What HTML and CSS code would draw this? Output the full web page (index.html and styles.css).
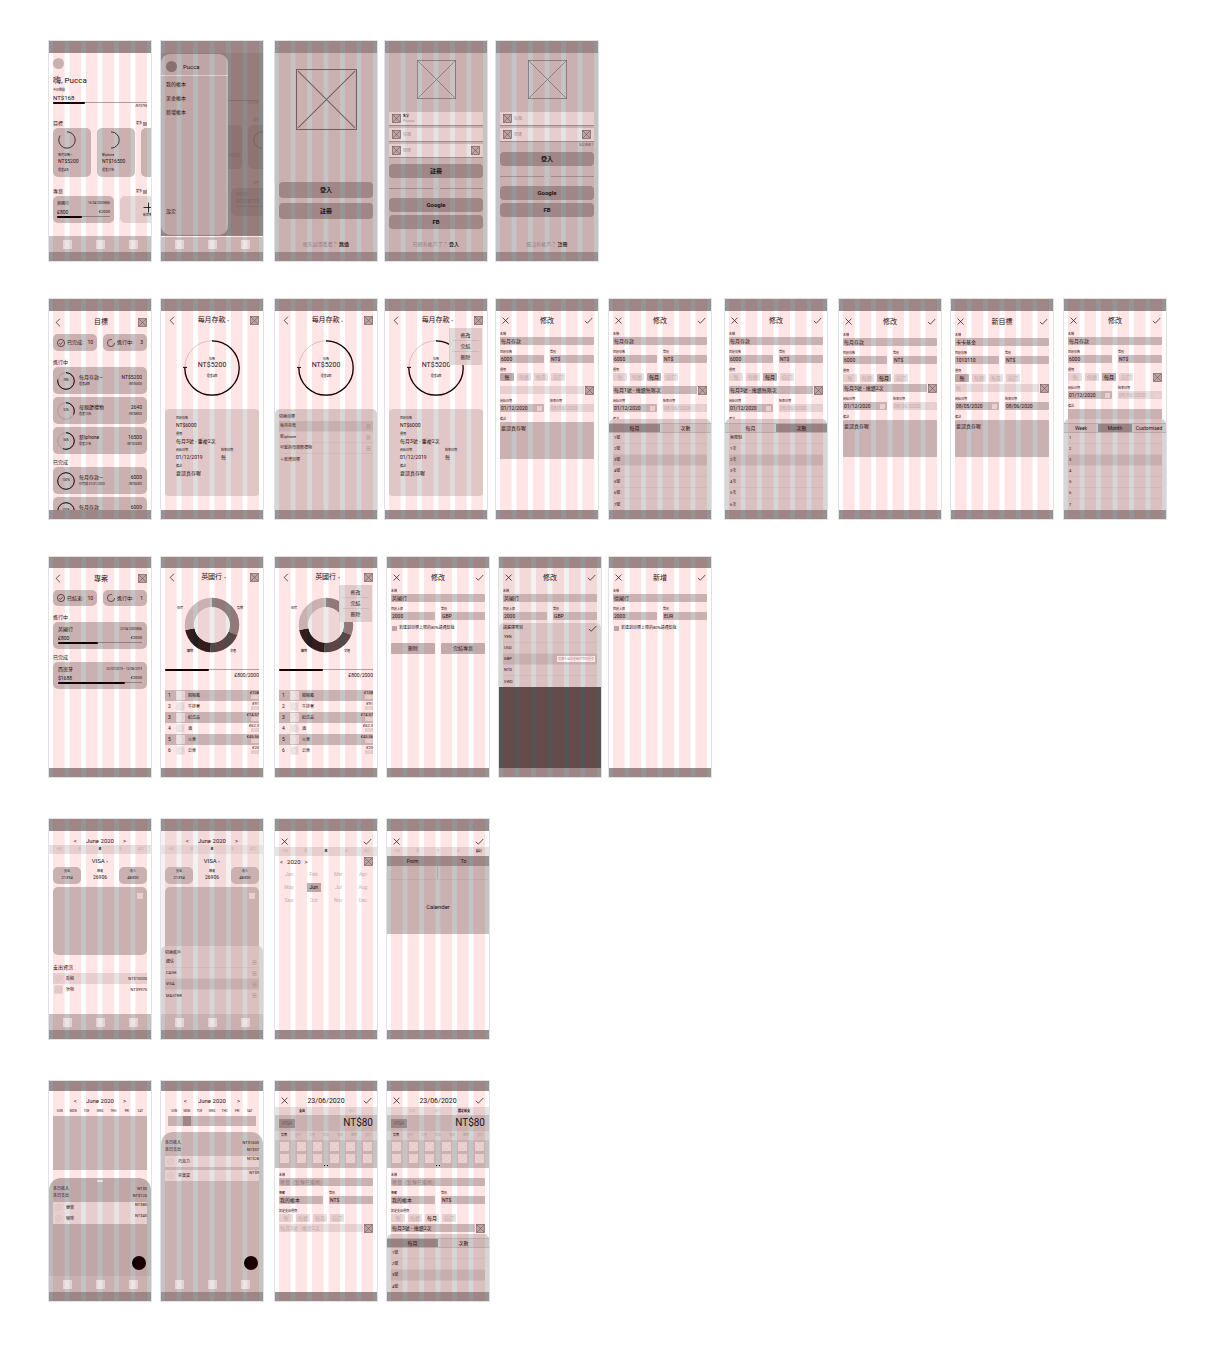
FILE: index.html
```html
<!DOCTYPE html>
<html lang="zh-Hant">
<head>
<meta charset="utf-8">
<meta name="viewport" content="width=device-width, initial-scale=1">
<title>Pucca wireframes</title>
<link rel="stylesheet" href="styles.css">
</head>
<body>
<svg class="defs" aria-hidden="true">
  <symbol id="xbox" viewBox="0 0 10 10"><rect x=".4" y=".4" width="9.2" height="9.2"/><path d="M.8.8l8.4 8.4M9.2.8L.8 9.2"/></symbol>
  <symbol id="frame" viewBox="0 0 60 60"><rect x=".5" y=".5" width="59" height="59"/><path d="M2 2l56 56M58 2L2 58"/></symbol>
  <symbol id="back" viewBox="0 0 10 10"><path d="M6.6.8L2.4 5l4.2 4.2"/></symbol>
  <symbol id="close" viewBox="0 0 10 10"><path d="M1.8 1.8l6.6 6.6M8.4 1.8L1.8 8.4"/></symbol>
  <symbol id="check" viewBox="0 0 10 10"><path d="M1 5.4l2.7 2.6L9.2 2.2"/></symbol>
  <symbol id="bars" viewBox="0 0 6 6"><path d="M.5 1h5M.5 3h5M.5 5h5"/></symbol>
  <symbol id="plus" viewBox="0 0 10 10"><path d="M5 .5v9M.5 5h9"/></symbol>
  <symbol id="donut" viewBox="0 0 94 58">
    <g fill="none" stroke-width="9.4" transform="rotate(-90 47 29)">
      <circle cx="47" cy="29" r="22.5" stroke="#868686" pathLength="100" stroke-dasharray="31 100"/>
      <circle cx="47" cy="29" r="22.5" stroke="#4c4c4c" pathLength="100" stroke-dasharray="20 100" stroke-dashoffset="-31"/>
      <circle cx="47" cy="29" r="22.5" stroke="#1f1f1f" pathLength="100" stroke-dasharray="21 100" stroke-dashoffset="-51"/>
      <circle cx="47" cy="29" r="22.5" stroke="#c4c4c4" pathLength="100" stroke-dasharray="28 100" stroke-dashoffset="-72"/>
    </g>
    <circle cx="47" cy="29" r="17.8" fill="#ececec"/>
  </symbol>
  <symbol id="dial" viewBox="0 0 58 58">
    <g fill="none" transform="rotate(-90 29 29)">
      <circle cx="29" cy="29" r="27.2" stroke="#b8b8b8" stroke-width=".6"/>
      <circle cx="29" cy="29" r="27.2" stroke="#000" stroke-width="1.3" pathLength="100" stroke-dasharray="75 100"/>
    </g>
    <path d="M0 28.4h4" fill="none" stroke="#000"/>
  </symbol>
</svg>

<main class="board">

<!-- Home and sign-in -->
<div class="row row--home">
  <section class="screen">
    <div class="status"></div>
    <div class="body pad">
      <div class="avatar home-avatar"></div>
      <h1 class="greeting">嗨, Pucca</h1>
      <p class="t3 line6">今日剩餘</p>
      <p class="t6 amount">NT$168</p>
      <div class="bar"><i style="width:34%"></i></div>
      <p class="t3 right line5">/NT$798</p>
      <div class="section"><h2>目標</h2><a href="#">更多 <svg class="xbox s4"><use href="#xbox"/></svg></a></div>
      <div class="cards">
        <article class="card goal"><svg class="ring17" viewBox="0 0 18 18"><circle cx="9" cy="9" r="8.2" pathLength="100" stroke-dasharray="84 100"/></svg><span class="t3">每月存款—</span><b>NT$5200</b><small>還差4天</small></article>
        <article class="card goal"><svg class="ring17" viewBox="0 0 18 18"><circle cx="9" cy="9" r="8.2" pathLength="100" stroke-dasharray="50 100"/></svg><span class="t3">新iphone</span><b>NT$16500</b><small>還差27天</small></article>
        <article class="card goal"></article>
      </div>
      <div class="section"><h2>專案</h2><a href="#">更多 <svg class="xbox s4"><use href="#xbox"/></svg></a></div>
      <div class="cards">
        <article class="card project"><div class="split"><span class="t4">英國行</span><span class="t3">16/04/2020開始</span></div><div class="split"><span class="t5">£800</span><span class="t4">£2000</span></div><div class="bar"><i style="width:48%"></i></div></article>
        <button class="card add"><svg class="icon s11"><use href="#plus"/></svg><span>新增專案</span></button>
      </div>
      <nav class="tabbar"><svg class="xbox light s9"><use href="#xbox"/></svg><svg class="xbox light s9"><use href="#xbox"/></svg><svg class="xbox light s9"><use href="#xbox"/></svg></nav>
    </div>
    <div class="home"></div>
  </section>

  <section class="screen">
    <div class="status"></div>
    <div class="body shade">
      <div class="ghost">
        <div class="bar"></div>
        <p class="t3">/NT$798</p>
        <p class="t3 ghost-more">更多</p>
        <div class="cards"><div class="card goal"><b>NT$16500</b></div><div class="card goal"><svg class="ring17" viewBox="0 0 18 18"><circle cx="9" cy="9" r="8.2" pathLength="100" stroke-dasharray="84 100" transform="rotate(180 9 9)"/></svg></div></div>
        <p class="t3 ghost-more">更多</p>
        <div class="card ghost-project"><span class="t4">西班牙</span><span class="t5">NT$18718</span><div class="bar"></div></div>
      </div>
      <aside class="drawer">
        <div class="drawer-user"><div class="avatar dark"></div><span>Pucca</span></div>
        <a href="#">我的帳本</a><a href="#">美金帳本</a><a href="#">新增帳本</a>
        <a href="#" class="last">設定</a>
      </aside>
      <nav class="tabbar lined"><svg class="xbox light s9"><use href="#xbox"/></svg><svg class="xbox light s9"><use href="#xbox"/></svg><svg class="xbox light s9"><use href="#xbox"/></svg></nav>
    </div>
    <div class="home"></div>
  </section>

  <section class="screen grey">
    <div class="status"></div>
    <div class="body pad">
      <svg class="frame logo-lg"><use href="#frame"/></svg>
      <div class="stack start"><button class="cta tall">登入</button><button class="cta tall">註冊</button></div>
      <p class="switch">想先試用看看？ <a href="#">跳過</a></p>
    </div>
    <div class="home"></div>
  </section>

  <section class="screen grey">
    <div class="status"></div>
    <div class="body pad">
      <svg class="frame logo"><use href="#frame"/></svg>
      <div class="entries">
        <label class="entry"><svg class="xbox s9"><use href="#xbox"/></svg><span class="named"><small>名字</small><input aria-label="名字" placeholder="Pucca"></span></label>
        <label class="entry"><svg class="xbox s9"><use href="#xbox"/></svg><input aria-label="信箱" placeholder="信箱"></label>
        <label class="entry"><svg class="xbox s9"><use href="#xbox"/></svg><input aria-label="密碼" placeholder="密碼"><svg class="xbox s9"><use href="#xbox"/></svg></label>
      </div>
      <button class="cta gap6">註冊</button>
      <div class="or">○</div>
      <div class="stack"><button class="cta">Google</button><button class="cta">FB</button></div>
      <p class="switch">已經有帳戶了？ <a href="#">登入</a></p>
    </div>
    <div class="home"></div>
  </section>

  <section class="screen grey">
    <div class="status"></div>
    <div class="body pad">
      <svg class="frame logo"><use href="#frame"/></svg>
      <div class="entries">
        <label class="entry"><svg class="xbox s9"><use href="#xbox"/></svg><input aria-label="信箱" placeholder="信箱"></label>
        <label class="entry"><svg class="xbox s9"><use href="#xbox"/></svg><input aria-label="密碼" placeholder="密碼"><svg class="xbox s9"><use href="#xbox"/></svg></label>
      </div>
      <a href="#" class="forgot">忘記密碼？</a>
      <button class="cta">登入</button>
      <div class="or">○</div>
      <div class="stack"><button class="cta">Google</button><button class="cta">FB</button></div>
      <p class="switch">還沒有帳戶？ <a href="#">註冊</a></p>
    </div>
    <div class="home"></div>
  </section>
</div>

<!-- Goals -->
<div class="row row--goals">
  <section class="screen">
    <div class="status"></div>
    <div class="body pad">
      <header class="head head--tall"><svg class="icon s9"><use href="#back"/></svg><h2>目標</h2><svg class="xbox s9"><use href="#xbox"/></svg></header>
      <div class="pills"><div class="card pill"><svg class="icon s8" viewBox="0 0 10 10"><circle cx="5" cy="5" r="4.5"/><path d="M2.6 5.2l1.7 1.7 3.2-3.6"/></svg><span>已完成:</span><span>10</span></div><div class="card pill"><svg class="icon s8" viewBox="0 0 10 10"><circle cx="5" cy="5" r="4.5" pathLength="100" stroke-dasharray="80 100"/></svg><span>進行中:</span><span>3</span></div></div>
      <h3 class="heading">進行中</h3>
      <div class="list">
        <article class="card item"><div class="ring18"><svg viewBox="0 0 18 18"><circle class="track" cx="9" cy="9" r="8.3"/><circle cx="9" cy="9" r="8.3" pathLength="100" stroke-dasharray="78 100"/></svg><span>78%</span></div><div class="info"><span>每月存款—</span><small>還差4個</small></div><div class="info end"><span>NT$5200</span><small>/NT$6000</small></div></article>
        <article class="card item"><div class="ring18"><svg viewBox="0 0 18 18"><circle class="track" cx="9" cy="9" r="8.3"/><circle cx="9" cy="9" r="8.3" pathLength="100" stroke-dasharray="32 100"/></svg><span>32%</span></div><div class="info"><span>母親節禮物</span><small>還差13天</small></div><div class="info end"><span>2640</span><small>/NT$8000</small></div></article>
        <article class="card item"><div class="ring18"><svg viewBox="0 0 18 18"><circle class="track" cx="9" cy="9" r="8.3"/><circle cx="9" cy="9" r="8.3" pathLength="100" stroke-dasharray="56 100"/></svg><span>56%</span></div><div class="info"><span>新Iphone</span><small>還差27天</small></div><div class="info end"><span>16500</span><small>/NT$25000</small></div></article>
      </div>
      <h3 class="heading">已完成</h3>
      <div class="list">
        <article class="card item"><div class="ring18"><svg viewBox="0 0 18 18"><circle cx="9" cy="9" r="8.3"/></svg><span>100%</span></div><div class="info"><span>每月存款—</span><small>已完成 01/01/2020</small></div><div class="info end"><span>6000</span><small>/NT$6000</small></div></article>
        <article class="card item"><div class="ring18"><svg viewBox="0 0 18 18"><circle cx="9" cy="9" r="8.3"/></svg><span>100%</span></div><div class="info"><span>每月存款</span><small>已完成</small></div><div class="info end"><span>6000</span><small>/NT$6000</small></div></article>
      </div>
    </div>
    <div class="home"></div>
  </section>

  <section class="screen">
    <div class="status"></div>
    <div class="body pad">
      <header class="head head--detail"><svg class="icon s9"><use href="#back"/></svg><h2>每月存款 <span class="caret">▾</span></h2><svg class="xbox s9"><use href="#xbox"/></svg></header>
      <div class="dial"><svg><use href="#dial"/></svg><div><small>存款</small><b>NT$5200</b><small class="later">還差4個</small></div></div>
      <dl class="panel"><div><dt>目標存款</dt><dd>NT$6000</dd></div><div><dt>週期</dt><dd>每月3號 - 重複2次</dd></div><div class="half"><dt>開始日期</dt><dd>01/12/2019</dd></div><div class="half"><dt>結束日期</dt><dd>無</dd></div><div><dt>備註</dt><dd>要認真存喔</dd></div></dl>
    </div>
    <div class="home"></div>
  </section>

  <section class="screen">
    <div class="status"></div>
    <div class="body pad">
      <header class="head head--detail"><svg class="icon s9"><use href="#back"/></svg><h2>每月存款 <span class="caret">▴</span></h2><svg class="xbox s9"><use href="#xbox"/></svg></header>
      <div class="dial"><svg><use href="#dial"/></svg><div><small>存款</small><b>NT$5200</b><small class="later">還差4個</small></div></div>
      <div class="sheet sheet--goals">
        <h3>切換目標</h3>
        <ul class="options"><li class="on">每月存款<svg class="icon grey-icon s5"><use href="#bars"/></svg></li><li>新iphone<svg class="icon grey-icon s5"><use href="#bars"/></svg></li><li>可愛的母親節禮物<svg class="icon grey-icon s5"><use href="#bars"/></svg></li><li>＋新增目標</li></ul>
      </div>
    </div>
    <div class="home"></div>
  </section>

  <section class="screen">
    <div class="status"></div>
    <div class="body pad">
      <header class="head head--detail"><svg class="icon s9"><use href="#back"/></svg><h2>每月存款 <span class="caret">▾</span></h2><svg class="xbox s9"><use href="#xbox"/></svg></header>
      <div class="dial"><svg><use href="#dial"/></svg><div><small>存款</small><b>NT$5200</b><small class="later">還差4個</small></div></div>
      <dl class="panel"><div><dt>目標存款</dt><dd>NT$6000</dd></div><div><dt>週期</dt><dd>每月3號 - 重複2次</dd></div><div class="half"><dt>開始日期</dt><dd>01/12/2019</dd></div><div class="half"><dt>結束日期</dt><dd>無</dd></div><div><dt>備註</dt><dd>要認真存喔</dd></div></dl>
      <div class="menu"><button>修改</button><button>完結</button><button>刪除</button></div>
    </div>
    <div class="home"></div>
  </section>

  <section class="screen">
    <div class="status"></div>
    <div class="body pad">
      <header class="head"><svg class="icon s9"><use href="#close"/></svg><h2>修改</h2><svg class="icon s9"><use href="#check"/></svg></header>
      <form class="form">
        <label class="field">名稱<input value="每月存款"></label>
        <div class="pair"><label class="field">目標存款<input value="6000"></label><label class="field">幣別<input value="NT$"></label></div>
        <div class="cycle"><div class="field">週期<div class="chips"><button type="button" class="on">無</button><button type="button">每週</button><button type="button">每月</button><button type="button">自訂</button></div></div>
        <div class="note"><input aria-label="週期內容" disabled><svg class="xbox s9"><use href="#xbox"/></svg></div></div>
        <div class="pair"><label class="field">開始日期<span class="date"><input value="01/12/2020"><svg class="xbox light s5"><use href="#xbox"/></svg></span></label><label class="field">結束日期<input value="08/06/2020" disabled></label></div>
        <label class="field">備註<textarea>要認真存喔</textarea></label>
      </form>
    </div>
    <div class="home"></div>
  </section>

  <section class="screen">
    <div class="status"></div>
    <div class="body pad">
      <header class="head"><svg class="icon s9"><use href="#close"/></svg><h2>修改</h2><svg class="icon s9"><use href="#check"/></svg></header>
      <form class="form">
        <label class="field">名稱<input value="每月存款"></label>
        <div class="pair"><label class="field">目標存款<input value="6000"></label><label class="field">幣別<input value="NT$"></label></div>
        <div class="cycle"><div class="field">週期<div class="chips"><button type="button">無</button><button type="button">每週</button><button type="button" class="on">每月</button><button type="button">自訂</button></div></div>
        <div class="note"><input aria-label="週期內容" value="每月1號 - 連續無限次"><svg class="xbox s9"><use href="#xbox"/></svg></div></div>
        <div class="pair"><label class="field">開始日期<span class="date"><input value="01/12/2020"><svg class="xbox light s5"><use href="#xbox"/></svg></span></label><label class="field">結束日期<span class="date"><input value="08/06/2020" disabled><svg class="xbox light s5"><use href="#xbox"/></svg></span></label></div>
        <label class="field">備註<textarea></textarea></label>
      </form>
      <div class="sheet"><div class="tabs"><button class="on">每月</button><button>次數</button></div>
        <ul class="options"><li>1號</li><li>2號</li><li class="on">3號</li><li>4號</li><li>5號</li><li>6號</li><li>7號</li></ul></div>
    </div>
    <div class="home"></div>
  </section>

  <section class="screen">
    <div class="status"></div>
    <div class="body pad">
      <header class="head"><svg class="icon s9"><use href="#close"/></svg><h2>修改</h2><svg class="icon s9"><use href="#check"/></svg></header>
      <form class="form">
        <label class="field">名稱<input value="每月存款"></label>
        <div class="pair"><label class="field">目標存款<input value="6000"></label><label class="field">幣別<input value="NT$"></label></div>
        <div class="cycle"><div class="field">週期<div class="chips"><button type="button">無</button><button type="button">每週</button><button type="button" class="on">每月</button><button type="button">自訂</button></div></div>
        <div class="note"><input aria-label="週期內容" value="每月3號 - 連續無限次"><svg class="xbox s9"><use href="#xbox"/></svg></div></div>
        <div class="pair"><label class="field">開始日期<span class="date"><input value="01/12/2020"><svg class="xbox light s5"><use href="#xbox"/></svg></span></label><label class="field">結束日期<span class="date"><input value="08/06/2020" disabled><svg class="xbox light s5"><use href="#xbox"/></svg></span></label></div>
        <label class="field">備註<textarea></textarea></label>
      </form>
      <div class="sheet"><div class="tabs"><button>每月</button><button class="on">次數</button></div>
        <ul class="options"><li>無限制</li><li>1次</li><li class="on">2次</li><li>3次</li><li>4次</li><li>5次</li><li>6次</li></ul></div>
    </div>
    <div class="home"></div>
  </section>

  <section class="screen">
    <div class="status"></div>
    <div class="body pad">
      <header class="head head--form"><svg class="icon s9"><use href="#close"/></svg><h2>修改</h2><svg class="icon s9"><use href="#check"/></svg></header>
      <form class="form compact">
        <label class="field">名稱<input value="每月存款"></label>
        <div class="pair"><label class="field">目標存款<input value="6000"></label><label class="field">幣別<input value="NT$"></label></div>
        <div class="cycle"><div class="field">週期<div class="chips"><button type="button">無</button><button type="button">每週</button><button type="button" class="on">每月</button><button type="button">自訂</button></div></div>
        <div class="note"><input aria-label="週期內容" value="每月3號 - 連續2次"><svg class="xbox s9"><use href="#xbox"/></svg></div></div>
        <div class="pair"><label class="field">開始日期<span class="date"><input value="01/12/2020"><svg class="xbox light s5"><use href="#xbox"/></svg></span></label><label class="field">結束日期<span class="date"><input value="08/06/2020" disabled><svg class="xbox light s5"><use href="#xbox"/></svg></span></label></div>
        <label class="field">備註<textarea>要認真存喔</textarea></label>
      </form>
    </div>
    <div class="home"></div>
  </section>

  <section class="screen">
    <div class="status"></div>
    <div class="body pad">
      <header class="head head--form"><svg class="icon s9"><use href="#close"/></svg><h2>新目標</h2><svg class="icon s9"><use href="#check"/></svg></header>
      <form class="form compact">
        <label class="field">名稱<input value="卡卡基金"></label>
        <div class="pair"><label class="field">目標存款<input value="1010110"></label><label class="field">幣別<input value="NT$"></label></div>
        <div class="cycle"><div class="field">週期<div class="chips"><button type="button" class="on">無</button><button type="button">每週</button><button type="button">每月</button><button type="button">自訂</button></div></div>
        <div class="note"><input aria-label="週期內容" value="無" disabled><svg class="xbox s9"><use href="#xbox"/></svg></div></div>
        <div class="pair"><label class="field">開始日期<span class="date"><input value="08/05/2020"><svg class="xbox light s5"><use href="#xbox"/></svg></span></label><label class="field">結束日期<input value="08/06/2020"></label></div>
        <label class="field">備註<textarea>要認真存喔</textarea></label>
      </form>
    </div>
    <div class="home"></div>
  </section>

  <section class="screen">
    <div class="status"></div>
    <div class="body pad">
      <header class="head"><svg class="icon s9"><use href="#close"/></svg><h2>修改</h2><svg class="icon s9"><use href="#check"/></svg></header>
      <form class="form">
        <label class="field">名稱<input value="每月存款"></label>
        <div class="pair"><label class="field">目標存款<input value="6000"></label><label class="field">幣別<input value="NT$"></label></div>
        <div class="field">週期<div class="chips"><button type="button">無</button><button type="button">每週</button><button type="button" class="on">每月</button><button type="button">自訂</button><svg class="xbox s9 push"><use href="#xbox"/></svg></div></div>
        <div class="pair"><label class="field">開始日期<span class="date"><input value="01/12/2020"><svg class="xbox light s5"><use href="#xbox"/></svg></span></label><label class="field">結束日期<span class="date"><input value="08/06/2020" disabled><svg class="xbox light s5"><use href="#xbox"/></svg></span></label></div>
        <label class="field">備註<textarea></textarea></label>
      </form>
      <div class="sheet"><div class="tabs"><button>Week</button><button class="on">Month</button><button>Customised</button></div>
        <ul class="options"><li>1</li><li>2</li><li class="on">3</li><li>4</li><li>5</li><li>6</li><li>7</li></ul></div>
    </div>
    <div class="home"></div>
  </section>
</div>

<!-- Projects -->
<div class="row row--projects">
  <section class="screen">
    <div class="status"></div>
    <div class="body pad">
      <header class="head head--form"><svg class="icon s9"><use href="#back"/></svg><h2>專案</h2><svg class="xbox s9"><use href="#xbox"/></svg></header>
      <div class="pills"><div class="card pill"><svg class="icon s8" viewBox="0 0 10 10"><circle cx="5" cy="5" r="4.5"/><path d="M2.6 5.2l1.7 1.7 3.2-3.6"/></svg><span>已結束:</span><span>10</span></div><div class="card pill"><svg class="icon s8" viewBox="0 0 10 10"><circle cx="5" cy="5" r="4.5" pathLength="100" stroke-dasharray="80 100"/></svg><span>進行中:</span><span>1</span></div></div>
      <h3 class="heading">進行中</h3>
      <article class="card project wide"><div class="split"><span class="t5">英國行</span><span class="t3">23/04/2020開始</span></div><div class="split"><span class="t5">£800</span><span class="t4">£2000</span></div><div class="bar"><i style="width:48%"></i></div></article>
      <h3 class="heading">已完成</h3>
      <article class="card project wide"><div class="split"><span class="t5">西班牙</span><span class="t3">02/07/2019 – 10/08/2019</span></div><div class="split"><span class="t5">$1688</span><span class="t4">£2000</span></div><div class="bar"><i style="width:80%"></i></div></article>
    </div>
    <div class="home"></div>
  </section>

  <section class="screen">
    <div class="status"></div>
    <div class="body pad">
      <header class="head head--detail"><svg class="icon s9"><use href="#back"/></svg><h2>英國行 <span class="caret">▾</span></h2><svg class="xbox s9"><use href="#xbox"/></svg></header>
      <svg class="donut" viewBox="0 0 94 58"><use href="#donut"/><text x="12" y="13">住宿</text><text x="72" y="13">食物</text><text x="22" y="56">購物</text><text x="65" y="56">交通</text></svg>
      <div class="bar"><i style="width:47%"></i></div>
      <p class="t5 right line8">£800/2000</p>
      <ol class="spend">
        <li><b>1</b><svg class="xbox light s9"><use href="#xbox"/></svg><span>粗眼霜</span><em>£108<svg class="chip-box xbox light"><use href="#xbox"/></svg></em></li>
        <li><b>2</b><svg class="xbox light s9"><use href="#xbox"/></svg><span>牛排餐</span><em>£91<svg class="chip-box xbox light"><use href="#xbox"/></svg></em></li>
        <li><b>3</b><svg class="xbox light s9"><use href="#xbox"/></svg><span>紀念品</span><em>£74.57<svg class="chip-box xbox light"><use href="#xbox"/></svg></em></li>
        <li><b>4</b><svg class="xbox light s9"><use href="#xbox"/></svg><span>酒</span><em>£62.3<svg class="chip-box xbox light"><use href="#xbox"/></svg></em></li>
        <li><b>5</b><svg class="xbox light s9"><use href="#xbox"/></svg><span>火車</span><em>£45.56<svg class="chip-box xbox light"><use href="#xbox"/></svg></em></li>
        <li><b>6</b><svg class="xbox light s9"><use href="#xbox"/></svg><span>公車</span><em>£20<svg class="chip-box xbox light"><use href="#xbox"/></svg></em></li>
      </ol>
    </div>
    <div class="home"></div>
  </section>

  <section class="screen">
    <div class="status"></div>
    <div class="body pad">
      <header class="head head--detail"><svg class="icon s9"><use href="#back"/></svg><h2>英國行 <span class="caret">▾</span></h2><svg class="xbox s9"><use href="#xbox"/></svg></header>
      <svg class="donut" viewBox="0 0 94 58"><use href="#donut"/><text x="12" y="13">住宿</text><text x="22" y="56">購物</text><text x="65" y="56">交通</text></svg>
      <div class="bar"><i style="width:47%"></i></div>
      <p class="t5 right line8">£800/2000</p>
      <ol class="spend">
        <li><b>1</b><svg class="xbox light s9"><use href="#xbox"/></svg><span>粗眼霜</span><em>£108<svg class="chip-box xbox light"><use href="#xbox"/></svg></em></li>
        <li><b>2</b><svg class="xbox light s9"><use href="#xbox"/></svg><span>牛排餐</span><em>£91<svg class="chip-box xbox light"><use href="#xbox"/></svg></em></li>
        <li><b>3</b><svg class="xbox light s9"><use href="#xbox"/></svg><span>紀念品</span><em>£74.57<svg class="chip-box xbox light"><use href="#xbox"/></svg></em></li>
        <li><b>4</b><svg class="xbox light s9"><use href="#xbox"/></svg><span>酒</span><em>£62.3<svg class="chip-box xbox light"><use href="#xbox"/></svg></em></li>
        <li><b>5</b><svg class="xbox light s9"><use href="#xbox"/></svg><span>火車</span><em>£45.56<svg class="chip-box xbox light"><use href="#xbox"/></svg></em></li>
        <li><b>6</b><svg class="xbox light s9"><use href="#xbox"/></svg><span>公車</span><em>£20<svg class="chip-box xbox light"><use href="#xbox"/></svg></em></li>
      </ol>
      <div class="menu"><button>修改</button><button>完結</button><button>刪除</button></div>
    </div>
    <div class="home"></div>
  </section>

  <section class="screen">
    <div class="status"></div>
    <div class="body pad">
      <header class="head"><svg class="icon s9"><use href="#close"/></svg><h2>修改</h2><svg class="icon s9"><use href="#check"/></svg></header>
      <form class="form">
        <label class="field">名稱<input value="英國行"></label>
        <div class="pair"><label class="field">目標上限<input value="2000"></label><label class="field">幣別<input value="GBP"></label></div>
        <label class="tick"><input type="checkbox">若達到目標上限的80%請通知我</label>
        <div class="pair actions"><button type="button">刪除</button><button type="button">完結專案</button></div>
      </form>
    </div>
    <div class="home"></div>
  </section>

  <section class="screen">
    <div class="status"></div>
    <div class="body pad dim">
      <header class="head"><svg class="icon s9"><use href="#close"/></svg><h2>修改</h2><svg class="icon s9"><use href="#check"/></svg></header>
      <form class="form">
        <label class="field">名稱<input value="英國行"></label>
        <div class="pair"><label class="field">目標上限<input value="2000"></label><label class="field">幣別<input value="GBP"></label></div>
      </form>
      <div class="sheet sheet--currency">
        <h3>請選擇幣別<svg class="icon s9"><use href="#check"/></svg></h3>
        <ul class="options"><li>YEN</li><li>USD</li><li class="on">GBP<span class="tag">建議先至設定新增幣別匯率</span></li><li>NTD</li><li>SWD</li></ul>
        <div class="keyboard"></div>
      </div>
    </div>
    <div class="home"></div>
  </section>

  <section class="screen">
    <div class="status"></div>
    <div class="body pad">
      <header class="head"><svg class="icon s9"><use href="#close"/></svg><h2>新增</h2><svg class="icon s9"><use href="#check"/></svg></header>
      <form class="form">
        <label class="field">名稱<input value="德國行"></label>
        <div class="pair"><label class="field">目標上限<input value="2000"></label><label class="field">幣別<input value="EUR"></label></div>
        <label class="tick"><input type="checkbox">若達到目標上限的80%請通知我</label>
      </form>
    </div>
    <div class="home"></div>
  </section>
</div>

<!-- Reports -->
<div class="row row--reports spaced">
  <section class="screen">
    <div class="status"></div>
    <div class="body pad">
      <header class="month"><button>&lt;</button><h2>June 2020</h2><button>&gt;</button></header>
      <div class="strip"><span>今日</span><span>週</span><span class="on">月</span><span>年</span><span>自訂</span></div>
      <p class="t6 account">VISA <span class="caret">▾</span></p>
      <div class="totals"><div class="card"><small>支出</small><span>21394</span></div><div><small>總資</small><span class="t5">26906</span></div><div class="card"><small>收入</small><span>48300</span></div></div>
      <div class="card chart"><svg class="xbox light s6"><use href="#xbox"/></svg></div>
      <h3 class="heading expense-title">支出資訊</h3>
      <ul class="entries-list"><li class="on"><svg class="xbox pale s9"><use href="#xbox"/></svg><span>房租</span><em>NT$10000</em></li><li><svg class="xbox pale s9"><use href="#xbox"/></svg><span>食物</span><em>NT$9970</em></li></ul>
      <nav class="tabbar"><svg class="xbox light s9"><use href="#xbox"/></svg><svg class="xbox light s9"><use href="#xbox"/></svg><svg class="xbox light s9"><use href="#xbox"/></svg></nav>
    </div>
    <div class="home"></div>
  </section>

  <section class="screen">
    <div class="status"></div>
    <div class="body pad dim">
      <header class="month"><button>&lt;</button><h2>June 2020</h2><button>&gt;</button></header>
      <div class="strip"><span>今日</span><span>週</span><span class="on">月</span><span>年</span><span>自訂</span></div>
      <p class="t6 account">VISA <span class="caret">▾</span></p>
      <div class="totals"><div class="card"><small>支出</small><span>21394</span></div><div><small>總資</small><span class="t5">26906</span></div><div class="card"><small>收入</small><span>48300</span></div></div>
      <div class="card chart"><svg class="xbox light s6"><use href="#xbox"/></svg></div>
      <div class="sheet sheet--accounts">
        <h3>切換帳戶</h3>
        <ul class="options"><li>總信<svg class="icon grey-icon s5"><use href="#bars"/></svg></li><li>CASH<svg class="icon grey-icon s5"><use href="#bars"/></svg></li><li class="on">VISA<svg class="icon grey-icon s5"><use href="#bars"/></svg></li><li>MASTER<svg class="icon grey-icon s5"><use href="#bars"/></svg></li></ul>
      </div>
      <nav class="tabbar"><svg class="xbox light s9"><use href="#xbox"/></svg><svg class="xbox light s9"><use href="#xbox"/></svg><svg class="xbox light s9"><use href="#xbox"/></svg></nav>
    </div>
    <div class="home"></div>
  </section>

  <section class="screen">
    <div class="status"></div>
    <div class="body pad">
      <header class="head head--low"><svg class="icon s9"><use href="#close"/></svg><svg class="icon s9"><use href="#check"/></svg></header>
      <div class="strip"><span>今日</span><span>週</span><span class="on">月</span><span>年</span><span>自訂</span></div>
      <div class="year"><button>&lt;</button><b>2020</b><button>&gt;</button><svg class="xbox s9 push"><use href="#xbox"/></svg></div>
      <div class="months"><button>Jan</button><button>Feb</button><button>Mar</button><button>Apr</button><button>May</button><button class="on">Jun</button><button>Jul</button><button>Aug</button><button>Sep</button><button>Oct</button><button>Nov</button><button>Dec</button></div>
    </div>
    <div class="home"></div>
  </section>

  <section class="screen">
    <div class="status"></div>
    <div class="body pad">
      <header class="head head--low"><svg class="icon s9"><use href="#close"/></svg><svg class="icon s9"><use href="#check"/></svg></header>
      <div class="strip"><span>今日</span><span>週</span><span>月</span><span>年</span><span class="on">自訂</span></div>
      <div class="range"><div class="range-head"><span>From</span><span>To</span></div><div class="range-values"><span></span><span></span></div><p>Calender</p></div>
    </div>
    <div class="home"></div>
  </section>
</div>

<!-- Calendar and entry -->
<div class="row row--entry spaced">
  <section class="screen">
    <div class="status"></div>
    <div class="body pad">
      <header class="month month--short"><button>&lt;</button><h2>June 2020</h2><button>&gt;</button></header>
      <div class="week"><span>SUN</span><span>MON</span><span>TUE</span><span>WED</span><span>THU</span><span>FRI</span><span>SAT</span></div>
      <div class="calendar"></div>
      <div class="sheet day sheet--low">
        <i class="handle"></i>
        <div class="split"><span>本日收入</span><span>NT$0</span></div><div class="split"><span>本日支出</span><span>NT$125</span></div>
        <ul class="day-list"><li><svg class="xbox pale s9"><use href="#xbox"/></svg><span>便當</span><em>NT$80</em></li><li><svg class="xbox pale s9"><use href="#xbox"/></svg><span>咖啡</span><em>NT$45</em></li></ul>
      </div>
      <button class="fab" aria-label="新增"></button>
      <nav class="tabbar"><svg class="xbox light s9"><use href="#xbox"/></svg><svg class="xbox light s9"><use href="#xbox"/></svg><svg class="xbox light s9"><use href="#xbox"/></svg></nav>
    </div>
    <div class="home"></div>
  </section>

  <section class="screen">
    <div class="status"></div>
    <div class="body pad">
      <header class="month month--short month--wide"><button>&lt;</button><h2>June 2020</h2><button>&gt;</button></header>
      <div class="week week--narrow"><span>SUN</span><span>MON</span><span>TUE</span><span>WED</span><span>THU</span><span>FRI</span><span>SAT</span></div>
      <div class="week-cells"><i></i><i class="on"></i><i></i><i></i><i></i><i></i><i></i></div>
      <div class="sheet day sheet--high">
        <div class="split"><span>本日收入</span><span>NT$1600</span></div><div class="split"><span>本日支出</span><span>NT$37</span></div>
        <ul class="day-list apart"><li><svg class="xbox pale s9"><use href="#xbox"/></svg><span>巧克力</span><em>NT$28</em></li><li><svg class="xbox pale s9"><use href="#xbox"/></svg><span>茶葉蛋</span><em>NT$9</em></li></ul>
      </div>
      <button class="fab" aria-label="新增"></button>
      <nav class="tabbar clear"><svg class="xbox light s9"><use href="#xbox"/></svg><svg class="xbox light s9"><use href="#xbox"/></svg><svg class="xbox light s9"><use href="#xbox"/></svg></nav>
    </div>
    <div class="home"></div>
  </section>

  <section class="screen">
    <div class="status"></div>
    <div class="body pad">
      <header class="head head--entry"><svg class="icon s9"><use href="#close"/></svg><h2>23/06/2020</h2><svg class="icon s9"><use href="#check"/></svg></header>
      <div class="strip kind"><span class="on">支出</span><span>收入</span></div>
      <div class="money">
        <div class="sum"><button>VISA</button><output>NT$80</output></div>
        <div class="cats"><span class="on">食物</span><span>飲料</span><span>交通</span><span>娛樂</span><span>服飾</span><span>購物</span><span>其它</span></div>
        <div class="icons"><svg class="xbox light s9"><use href="#xbox"/></svg><svg class="xbox light s9"><use href="#xbox"/></svg><svg class="xbox light s9"><use href="#xbox"/></svg><svg class="xbox light s9"><use href="#xbox"/></svg><svg class="xbox light s9"><use href="#xbox"/></svg><svg class="xbox light s9"><use href="#xbox"/></svg><svg class="xbox light s9"><use href="#xbox"/></svg><svg class="xbox light s9"><use href="#xbox"/></svg><svg class="xbox light s9"><use href="#xbox"/></svg><svg class="xbox light s9"><use href="#xbox"/></svg><svg class="xbox light s9"><use href="#xbox"/></svg><svg class="xbox light s9"><use href="#xbox"/></svg></div>
        <div class="dots"><i></i><i></i></div>
      </div>
      <form class="form compact entry-form">
        <label class="field">名稱<input placeholder="晚餐（點擊已編輯）"></label>
        <div class="pair"><label class="field">專案<input value="我的帳本"></label><label class="field">幣別<input value="NT$"></label></div>
        <div class="cycle"><div class="field">設定支出週期<div class="chips"><button type="button">無</button><button type="button">每週</button><button type="button">每月</button><button type="button">自訂</button></div></div>
        <div class="note"><input aria-label="週期內容" value="每月3號 - 連續2次" disabled><svg class="xbox s9"><use href="#xbox"/></svg></div></div>
      </form>
    </div>
    <div class="home"></div>
  </section>

  <section class="screen">
    <div class="status"></div>
    <div class="body pad">
      <header class="head head--entry"><svg class="icon s9"><use href="#close"/></svg><h2>23/06/2020</h2><svg class="icon s9"><use href="#check"/></svg></header>
      <div class="strip kind kind--three"><span>支出</span><span>收入</span><span class="on">固定收支</span></div>
      <div class="money">
        <div class="sum"><button>VISA</button><output>NT$80</output></div>
        <div class="cats"><span class="on">食物</span><span>飲料</span><span>交通</span><span>娛樂</span><span>服飾</span><span>購物</span><span>其它</span></div>
        <div class="icons"><svg class="xbox light s9"><use href="#xbox"/></svg><svg class="xbox light s9"><use href="#xbox"/></svg><svg class="xbox light s9"><use href="#xbox"/></svg><svg class="xbox light s9"><use href="#xbox"/></svg><svg class="xbox light s9"><use href="#xbox"/></svg><svg class="xbox light s9"><use href="#xbox"/></svg><svg class="xbox light s9"><use href="#xbox"/></svg><svg class="xbox light s9"><use href="#xbox"/></svg><svg class="xbox light s9"><use href="#xbox"/></svg><svg class="xbox light s9"><use href="#xbox"/></svg><svg class="xbox light s9"><use href="#xbox"/></svg><svg class="xbox light s9"><use href="#xbox"/></svg></div>
        <div class="dots"><i></i><i></i></div>
      </div>
      <form class="form compact entry-form">
        <label class="field">名稱<input placeholder="晚餐（點擊已編輯）"></label>
        <div class="pair"><label class="field">專案<input value="我的帳本"></label><label class="field">幣別<input value="NT$"></label></div>
        <div class="cycle"><div class="field">設定支出週期<div class="chips"><button type="button">無</button><button type="button">每週</button><button type="button" class="on pale-on">每月</button><button type="button">自訂</button></div></div>
        <div class="note"><input aria-label="週期內容" value="每月3號 - 連續2次"><svg class="xbox s9"><use href="#xbox"/></svg></div></div>
      </form>
      <div class="sheet"><div class="tabs"><button class="on">每月</button><button>次數</button></div>
        <ul class="options"><li>1號</li><li>2號</li><li class="on">3號</li><li>4號</li></ul></div>
    </div>
    <div class="home"></div>
  </section>
</div>
</main>
</body>
</html>
```
FILE: styles.css
```css
*, *::before, *::after { box-sizing: border-box; }
body { margin: 0; background: #fff; color: #111; font-family: Roboto, "Noto Sans CJK TC", sans-serif; }
h1, h2, h3, p, ul, ol, dl, dd { margin: 0; padding: 0; font-weight: 400; }
ul, ol { list-style: none; }
a { color: inherit; text-decoration: none; }
em { font-style: normal; }
b { font-weight: 400; }
button, input, textarea { margin: 0; padding: 0; border: 0; background: none; color: inherit; font: inherit; }
svg { display: block; flex: none; }
.defs { position: absolute; width: 0; height: 0; }

/* Board */
.board { padding: 40px 48px; display: flex; flex-direction: column; gap: 36px; }
.row { display: grid; justify-items: start; }
.spaced { margin-top: 4px; }
.row--home { grid-template-columns: 112px 114px 110px 111px 104px; }
.row--goals { grid-template-columns: 112px 114px 110px 111px 113px 116px 114px 112px 113px 104px; }
.row--projects { grid-template-columns: 112px 114px 112px 112px 110px 104px; }
.row--reports, .row--entry { grid-template-columns: 112px 114px 112px 104px; }

/* Artboard with its six-column grid drawn on top */
.screen { position: relative; width: 104px; height: 222px; border: 1px solid #e2e2e2; display: flex; flex-direction: column; overflow: hidden; background: #fff; font-size: 4px; line-height: 1; white-space: nowrap; }
.screen::after { content: ""; position: absolute; inset: 0 -1px 0 4px; background: linear-gradient(90deg, rgba(255, 0, 0, .1) 68%, transparent 68%) 0 0 / calc(100% / 6) 100%; pointer-events: none; z-index: 9; }
.grey { background: #c4c4c4; }
.status { height: 12px; flex: none; background: #949494; }
.home { height: 9px; flex: none; background: #949494; }
.row--projects .status { height: 11px; }
.row--entry .status { height: 10px; }
.body { position: relative; flex: 1; min-height: 0; display: flex; flex-direction: column; overflow: hidden; }
.body > * { flex: none; }
.pad { padding: 0 4px; }
.dim { background: #f2f2f2; }

.t3 { font-size: 3px; }
.t4 { font-size: 4px; }
.t5 { font-size: 5px; }
.t6 { font-size: 6px; }
.line5 { line-height: 5px; }
.line6 { line-height: 6px; }
.line8 { line-height: 8px; }
.right { text-align: right; }
.push { margin-left: auto; }
.split { display: flex; justify-content: space-between; align-items: center; }
small { font-size: 3px; }

/* Icons */
.xbox { fill: #b4b4b4; stroke: #555; stroke-width: .6px; }
.xbox.light { fill: #e4e4e4; stroke: #f4f4f4; }
.xbox.pale { fill: #dcdcdc; stroke: #ececec; }
.frame { fill: none; stroke: #666; stroke-width: 1px; }
.icon { fill: none; stroke: #111; stroke-width: .8px; }
.grey-icon { stroke: #999; stroke-width: .7px; }
.s4 { width: 4px; height: 4px; }
.s5 { width: 5px; height: 5px; }
.s6 { width: 6px; height: 6px; }
.s8 { width: 8px; height: 8px; }
.s9 { width: 9px; height: 9px; }
.s11 { width: 11px; height: 11px; }

/* Shared parts */
.card { background: #c4c4c4; border-radius: 5px; flex: none; }
.bar { height: 2px; display: flex; align-items: center; background: linear-gradient(#aaa, #aaa) 0 0 / 100% 1px no-repeat; }
.card .bar { background-image: linear-gradient(#888, #888); }
.bar i { height: 2px; background: #000; border-radius: 1px; }
.avatar { width: 11px; height: 11px; border-radius: 50%; background: #c4c4c4; }
.avatar.dark { background: #7c7c7c; }
.caret { font-size: 4px; color: #999; }
.heading { margin-top: 3px; font-size: 5px; line-height: 10px; }
.tabbar { margin: auto -4px 0; height: 16px; display: flex; justify-content: center; align-items: center; gap: 24px; background: #c4c4c4; position: relative; z-index: 3; }
.tabbar.clear { background: none; }
.head { height: 21px; padding-bottom: 2px; display: flex; justify-content: space-between; align-items: center; }
.head h2 { font-size: 7px; line-height: 10px; }
.head .icon { margin: 0 1px; }
.head--detail .icon { margin: 0 0 0 3px; }
.head--form { height: 22px; padding-bottom: 1px; }
.head--tall { height: 23px; padding-bottom: 1px; }
.head--low { height: 16px; padding: 5px 0 0; }
.head--entry { height: 16px; padding: 3px 0 0; }
.menu { position: absolute; top: 17px; right: 5px; width: 33px; padding: 2px 3px; border-radius: 1px; background: #dedede; display: flex; flex-direction: column; z-index: 2; }
.menu button { height: 11px; font-size: 5px; border-bottom: 1px solid #ccc; }
.menu button:last-child { border-bottom: 0; }

/* Home */
.home-avatar { margin-top: 5px; }
.greeting { margin-top: 6px; font-size: 8px; line-height: 12px; }
.amount { line-height: 9px; }
.section { margin-top: 10px; height: 9px; display: flex; justify-content: space-between; align-items: center; }
.section h2 { font-size: 5px; }
.section a { display: flex; gap: 1px; align-items: center; font-size: 3px; }
.cards { display: flex; gap: 6px; }
.goal { width: 38px; height: 49px; padding: 3px 5px; display: flex; flex-direction: column; }
.goal b { font-size: 5px; line-height: 6px; }
.goal .t3 { margin-top: 4px; line-height: 5px; }
.goal small { margin-top: 4px; line-height: 5px; }
.ring17 { width: 18px; height: 18px; fill: none; stroke: #111; stroke-width: .8px; transform: rotate(-90deg); }
.project { width: 61px; height: 27px; padding: 3px 4px; }
.project .split { height: 9px; }
.project .split + .split { height: 8px; }
.project.wide { width: 100%; padding: 3px 5px; }
.add { width: 61px; height: 27px; padding: 6px 0 0 23px; background: #e0e0e0; display: flex; flex-direction: column; align-items: flex-start; justify-content: flex-start; }
.add span { font-size: 3px; line-height: 5px; }

.shade { background: #8a8a8a; }
.drawer { position: absolute; top: 1px; left: 0; width: 67px; height: 181px; border-radius: 9px; background: #b8b8b8; display: flex; flex-direction: column; font-size: 5px; z-index: 2; }
.drawer-user { height: 22px; padding: 4px 5px 0; display: flex; align-items: center; gap: 6px; border-bottom: 1px solid #ddd; font-size: 6px; margin-bottom: 1px; }
.drawer a { padding-left: 5px; line-height: 14px; }
.drawer .last { margin-top: auto; margin-bottom: 17px; }
.shade .tabbar { margin: auto 0 0; }
.lined { border-top: 1px solid #fff; }
.ghost { padding: 47px 4px 0 48px; color: #6f6f6f; }
.ghost .t3 { text-align: right; line-height: 5px; }
.ghost .ghost-more { margin-top: 10px; line-height: 9px; }
.ghost .card { background: #808080; }
.ghost .bar { background: #777; height: 1px; }
.ghost .goal { height: 44px; padding-top: 6px; }
.ghost .ring17 { stroke: #666; }
.ghost .goal:first-child { padding: 27px 2px 0 0; align-items: flex-end; margin-left: -10px; }
.ghost .cards { padding-left: 5px; }
.ghost-project { margin-left: 22px; width: 61px; height: 28px; padding: 5px; display: flex; flex-direction: column; gap: 2px; }

/* Sign-in */
.logo-lg { width: 61px; height: 61px; margin: 16px auto 0; }
.logo { width: 39px; height: 39px; margin: 7px auto 0; }
.stack { display: flex; flex-direction: column; gap: 3px; }
.start { margin-top: 52px; gap: 5px; }
.cta { height: 14px; border-radius: 4px; background: #959595; font-size: 6px; font-weight: 700; }
.tall { height: 16px; }
.gap6 { margin-top: 6px; }
.switch { margin: auto 0 3px; text-align: center; font-size: 5px; line-height: 10px; color: #888; }
.switch a { color: #111; font-weight: 500; }
.entries { margin-top: 13px; display: flex; flex-direction: column; gap: 2px; }
.entry { height: 14px; padding: 0 3px; display: flex; align-items: center; gap: 2px; background: #e4e4e4; border-bottom: 1px solid #959595; }
.entry input { flex: 1; width: 100%; min-width: 0; height: 6px; font-size: 4px; }
.entry input::placeholder { color: #999; }
.named { display: flex; flex-direction: column; font-weight: 700; }
.named input { font-weight: 400; }
.forgot { height: 10px; text-align: right; font-size: 3px; line-height: 7px; color: #666; }
.or { height: 20px; display: flex; align-items: center; gap: 2px; font-size: 3px; color: #999; }
.or::before, .or::after { content: ""; flex: 1; height: 1px; background: #999; }

/* Goal list */
.pills { display: flex; gap: 6px; margin-bottom: 3px; }
.pill { flex: 1; height: 17px; padding: 0 4px; display: flex; align-items: center; gap: 2px; font-size: 5px; }
.row--projects .pill { height: 16px; }
.pill span:last-child { margin-left: auto; }
.list { display: flex; flex-direction: column; gap: 3px; }
.item { height: 27px; padding: 0 5px 0 4px; display: flex; align-items: center; gap: 4px; }
.ring18 { width: 18px; height: 18px; display: grid; place-items: center; font-size: 3px; }
.ring18 > * { grid-area: 1 / 1; }
.ring18 svg { width: 18px; height: 18px; fill: none; stroke: #000; stroke-width: 1px; transform: rotate(-90deg); }
.ring18 .track { stroke: #888; stroke-width: .5px; }
.info { display: flex; flex-direction: column; font-size: 5px; line-height: 7px; }
.info small { line-height: 6px; }
.end { margin-left: auto; text-align: right; }

/* Goal detail */
.dial { margin-top: 7px; display: grid; place-items: center; text-align: center; }
.dial > * { grid-area: 1 / 1; }
.dial svg { width: 58px; height: 58px; }
.dial small, .dial b { display: block; line-height: 5px; }
.dial b { font-size: 7px; line-height: 7px; }
.dial .later { margin-top: 5px; }
.panel { margin-top: 12px; height: 87px; padding: 6px 0 0 11px; border-radius: 4px; background: #dcdcdc; display: flex; flex-wrap: wrap; align-content: flex-start; gap: 2px 0; }
.panel div { width: 100%; }
.panel .half { width: 45px; flex: 0 0 auto; }
.panel .half + .half { width: 36px; }
.panel dt { font-size: 3px; line-height: 6px; }
.panel dd { font-size: 5px; line-height: 8px; }

/* Bottom sheets */
.sheet { position: absolute; left: 0; right: 0; bottom: 0; border-radius: 5px 5px 0 0; background: #d6d6d6; padding: 4px 0 0; display: flex; flex-direction: column; z-index: 2; }
.sheet h3 { font-size: 4px; line-height: 6px; padding: 0 4px; display: flex; justify-content: space-between; align-items: center; height: 6px; margin-bottom: 1px; }
.sheet--goals { top: 98px; }
.sheet--goals h3 { height: 7px; }
.sheet--accounts { top: 115px; }
.sheet--currency { top: 55px; padding-top: 2px; }
.keyboard { flex: 1; background: #545454; }
.options { padding: 0 4px; }
.options li { height: 11px; padding: 0 2px 0 1px; display: flex; align-items: center; justify-content: space-between; border-bottom: 1px solid #cdcdcd; font-size: 4px; }
.options li:last-child { border-bottom: 0; }
.options .on { background: #c2c2c2; border-radius: 1px; }
.tabs { display: flex; height: 10px; border: 1px solid #b5b5b5; border-width: 1px 0; background: #cacaca; }
.tabs button { flex: 1; font-size: 5px; }
.tabs .on { background: #8e8e8e; }
.tag { padding: 0 1px; background: #fff; color: #999; font-size: 3px; line-height: 6px; }

/* Forms */
.form { display: flex; flex-direction: column; gap: 5px; }
.field { display: flex; flex-direction: column; font-size: 3px; line-height: 5px; min-width: 0; }
.field input, .note input { width: 100%; min-width: 0; height: 8px; padding: 0 1px; border-radius: 1px; background: #c4c4c4; font-size: 5px; line-height: 8px; }
.field input:disabled, .note input:disabled { background: #e4e4e4; color: #bbb; }
.field input::placeholder { color: #888; }
.field textarea { height: 37px; padding: 2px 1px; border-radius: 1px; background: #c4c4c4; font-size: 5px; line-height: 8px; resize: none; overflow: hidden; }
.pair { display: grid; grid-template-columns: 1fr 1fr; gap: 6px; }
.cycle { display: flex; flex-direction: column; gap: 5px; }
.compact .cycle { gap: 2px; }
.chips { display: flex; gap: 3px; align-items: center; height: 8px; }
.chips button { width: 14px; height: 8px; border-radius: 1px; background: #e4e4e4; color: #bbb; font-size: 5px; line-height: 8px; }
.chips .on { background: #b4b4b4; color: #000; }
.chips .pale-on { background: #e4e4e4; }
.note { display: flex; align-items: center; gap: 1px; height: 8px; }
.date { display: grid; grid-template-columns: 1fr 5px 2px; align-items: center; }
.date input { grid-area: 1 / 1 / 2 / 4; }
.date svg { grid-area: 1 / 2; }
.tick { display: flex; align-items: center; gap: 2px; height: 6px; font-size: 4px; padding-left: 1px; }
.tick input { appearance: none; width: 5px; height: 5px; background: #b8b8b8; }
.actions { margin-top: 7px; }
.actions button { height: 11px; border-radius: 1px; background: #bcbcbc; font-size: 5px; }

/* Project detail */
.donut { width: 94px; height: 58px; margin: 7px 0 15px; font-size: 3px; }
.spend { margin-top: 11px; }
.spend li { height: 11px; padding-left: 3px; display: grid; grid-template-columns: 7px 9px 1fr auto; column-gap: 1px; align-items: center; }
.spend li:nth-child(odd) { background: #c4c4c4; }
.spend b { font-size: 5px; }
.spend span { padding-left: 2px; }
.spend em { align-self: start; display: flex; flex-direction: column; align-items: flex-end; line-height: 5px; }
.chip-box { width: 8px; height: 4px; background: #e0e0e0; }

/* Reports */
.month { height: 14px; padding-top: 6px; display: flex; justify-content: center; align-items: center; gap: 9px; font-size: 6px; line-height: 8px; }
.month h2 { font-size: 6px; }
.month--short { height: 16px; padding-top: 3px; }
.month--wide { gap: 11px; }
.strip { height: 9px; margin: 0 -4px; display: flex; align-items: center; justify-content: space-around; background: #e4e4e4; font-size: 3px; color: #c0c0c0; }
.strip span { flex: 1; text-align: center; }
.strip .on { color: #000; font-weight: 700; }
.account { height: 13px; line-height: 13px; text-align: center; }
.totals { display: grid; grid-template-columns: 3fr 4fr 3fr; height: 17px; text-align: center; }
.totals div { display: flex; flex-direction: column; padding-top: 2px; }
.totals small { line-height: 5px; }
.totals span { line-height: 7px; }
.chart { height: 68px; margin-top: 3px; padding: 6px 4px; display: flex; justify-content: flex-end; }
.expense-title { margin-top: 6px; line-height: 12px; }
.entries-list li { height: 11px; padding-left: 1px; display: flex; align-items: center; gap: 3px; }
.entries-list .on { background: #e4e4e4; }
.entries-list em, .day-list em { margin-left: auto; }
.year { height: 11px; padding-left: 1px; display: flex; align-items: center; gap: 4px; font-size: 6px; }
.months { margin-top: 3px; padding: 0 3px; display: grid; grid-template-columns: repeat(4, 14px); justify-content: space-between; gap: 4px 0; }
.months button { height: 9px; font-size: 5px; color: #c0c0c0; }
.months .on { background: #b4b4b4; color: #000; }
.range { margin: 0 -4px; height: 78px; background: #c4c4c4; display: flex; flex-direction: column; }
.range-head { height: 10px; display: grid; grid-template-columns: 1fr 1fr; align-items: center; text-align: center; background: #949494; font-size: 5px; }
.range-values { height: 14px; display: grid; grid-template-columns: 1fr 1fr; border-bottom: 1px solid #bbb; }
.range-values span:first-child { border-right: 1px solid #aaa; }
.range p { flex: 1; display: grid; place-items: center; font-size: 6px; }

/* Calendar day */
.week { height: 9px; display: grid; grid-template-columns: repeat(7, 1fr); align-items: center; text-align: center; font-size: 3px; }
.week--narrow, .week-cells { margin: 0 3px; }
.calendar { height: 54px; background: #c4c4c4; }
.week-cells { height: 10px; display: grid; grid-template-columns: repeat(7, 1fr); background: #c4c4c4; }
.week-cells .on { background: #949494; margin: 0 2px; }
.day { border-radius: 12px 12px 0 0; background: #b9b9b9; padding: 7px 4px 0; }
.day .split { height: 7px; }
.sheet--low { top: 87px; }
.sheet--high { top: 41px; background: #c4c4c4; }
.handle { position: absolute; top: 2px; left: 48px; width: 6px; height: 2px; border-radius: 1px; background: #e4e4e4; }
.day-list { margin-top: 3px; display: flex; flex-direction: column; }
.day-list li { height: 11px; padding-left: 1px; display: flex; align-items: center; gap: 3px; background: #e4e4e4; }
.day-list em { align-self: flex-start; line-height: 6px; }
.apart { gap: 3px; }
.fab { position: absolute; right: 5px; bottom: 22px; width: 14px; height: 14px; border-radius: 50%; background: #000; z-index: 3; }

/* New entry */
.kind { height: 8px; padding: 0 0 0 2px; }
.kind--three { padding: 0 12px; }
.money { margin: 0 -4px; padding: 0 4px; height: 53px; background: #c4c4c4; }
.sum { height: 16px; display: flex; justify-content: space-between; align-items: center; }
.sum button { width: 16px; height: 9px; background: #949494; color: #666; font-size: 5px; }
.sum output { font-size: 10px; }
.cats { height: 9px; margin: 0 -4px; padding: 0 2px; display: flex; align-items: center; background: #d4d4d4; font-size: 3px; color: #b0b0b0; }
.cats span { flex: 1; text-align: center; }
.cats .on { color: #000; }
.icons { padding: 2px 1px 0; display: grid; grid-template-columns: repeat(6, 9px); justify-content: space-between; row-gap: 3px; }
.dots { height: 5px; display: flex; justify-content: center; align-items: center; gap: 2px; }
.dots i { width: 1px; height: 1px; background: #000; }
.entry-form { padding-top: 5px; }
```
